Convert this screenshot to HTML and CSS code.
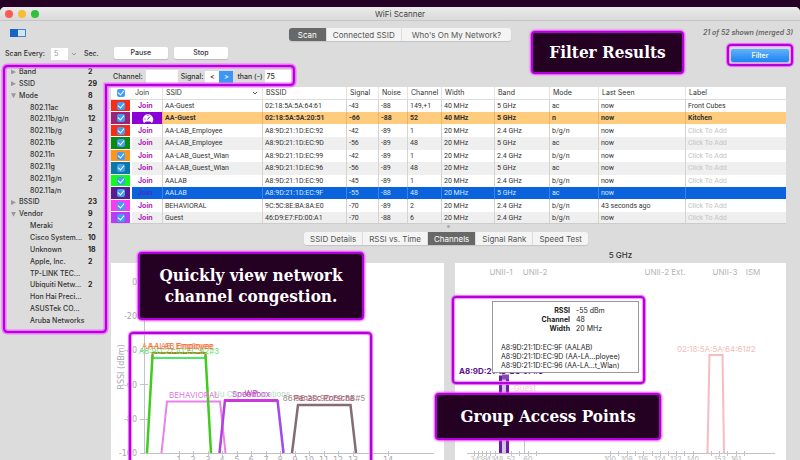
FILE: index.html
```html
<!DOCTYPE html>
<html lang="en">
<head>
<meta charset="utf-8">
<title>WiFi Scanner</title>
<link rel="stylesheet" href="styles.css">
</head>
<body>
<div class="window">
  <header class="titlebar">
    <span class="lights"><i class="light red"></i><i class="light yellow"></i><i class="light green"></i></span>
    <h1>WiFi Scanner</h1>
  </header>

  <div class="toolbar-top">
    <svg class="toggle" width="16" height="8" viewBox="0 0 16 8"><rect x=".5" y=".5" width="15" height="7" fill="#d3e3f3" stroke="#3f86cc"/><rect width="8" height="8" fill="#1565c8"/></svg>
    <nav class="tabs">
      <button class="tab active">Scan</button><button class="tab">Connected SSID</button><button class="tab wide">Who's On My Network?</button>
    </nav>
    <p class="count">21 of 52 shown (merged 3)</p>
  </div>

  <div class="toolbar-bottom">
    <label for="every">Scan Every:</label>
    <span class="combo"><select id="every" disabled><option>5</option></select><svg width="6" height="4" viewBox="0 0 6 4"><path d="M1 1l2 2 2-2" fill="none" stroke="#999"/></svg></span>
    <span class="sec">Sec.</span>
    <button class="push">Pause</button>
    <button class="push">Stop</button>
    <button class="push primary">Filter</button>
  </div>

  <div class="content">
    <ul class="sidebar">
      <li class="group"><span>Band</span><b>2</b></li>
      <li class="group"><span>SSID</span><b>29</b></li>
      <li class="group open"><span>Mode</span><b>8</b></li>
      <li><span>802.11ac</span><b>8</b></li>
      <li><span>802.11b/g/n</span><b>12</b></li>
      <li><span>802.11b/g</span><b>3</b></li>
      <li><span>802.11b</span><b>2</b></li>
      <li><span>802.11n</span><b>7</b></li>
      <li><span>802.11g</span></li>
      <li><span>802.11g/n</span><b>2</b></li>
      <li><span>802.11a/n</span></li>
      <li class="group"><span>BSSID</span><b>23</b></li>
      <li class="group open"><span>Vendor</span><b>9</b></li>
      <li><span>Meraki</span><b>2</b></li>
      <li><span>Cisco System...</span><b>10</b></li>
      <li><span>Unknown</span><b>18</b></li>
      <li><span>Apple, Inc.</span><b>2</b></li>
      <li><span>TP-LINK TEC...</span></li>
      <li><span>Ubiquiti Netw...</span><b>2</b></li>
      <li><span>Hon Hai Preci...</span></li>
      <li><span>ASUSTek CO...</span></li>
      <li><span>Aruba Networks</span></li>
    </ul>

    <main class="main">
      <form class="filters">
        <label for="channel">Channel:</label>
        <input id="channel" class="field channel" type="text">
        <label for="signal">Signal:</label>
        <span class="compare"><button type="button">&lt;</button><button type="button" class="on">&gt;</button></span>
        <label for="signal">than (-)</label>
        <input id="signal" class="field signal" type="text" value="75">
      </form>

      <div class="table-wrap">
      <table class="networks">
        <colgroup><col class="c-check"><col class="c-join"><col class="c-ssid"><col class="c-bssid"><col class="c-signal"><col class="c-noise"><col class="c-channel"><col class="c-width"><col class="c-band"><col class="c-mode"><col class="c-seen"><col></colgroup>
        <thead>
          <tr><th><input type="checkbox" checked aria-label="Show all"></th><th>Join</th><th class="sorted">SSID<svg width="6" height="4" viewBox="0 0 6 4"><path d="M1 1l2 2 2-2" fill="none" stroke="#555"/></svg></th><th>BSSID</th><th>Signal</th><th>Noise</th><th>Channel</th><th>Width</th><th>Band</th><th>Mode</th><th>Last Seen</th><th>Label</th></tr>
        </thead>
        <tbody>
          <tr><td class="sw s-red"><input type="checkbox" checked aria-label="Show"></td><td><a href="#">Join</a></td><td>AA-Guest</td><td>02:18:5A:5A:64:61</td><td>-43</td><td>-88</td><td>149,+1</td><td>40 MHz</td><td>5 GHz</td><td>ac</td><td>now</td><td>Front Cubes</td></tr>
          <tr class="current"><td class="sw s-plum"><input type="checkbox" checked aria-label="Show"></td><td class="gauge"><svg width="12" height="10" viewBox="0 0 12 10"><path d="M2 10A5.3 5.3 0 1 1 10 10L8 8.500H4z" fill="#fff"/><path d="M5.500 6.500L8 3.500M2.500 6h1M6 2v1" stroke="#7a1aa8" fill="none"/></svg></td><td>AA-Guest</td><td>02:18:5A:5A:20:51</td><td>-66</td><td>-88</td><td>52</td><td>40 MHz</td><td>5 GHz</td><td>n</td><td>now</td><td>Kitchen</td></tr>
          <tr><td class="sw s-red"><input type="checkbox" checked aria-label="Show"></td><td><a href="#">Join</a></td><td>AA-LAB_Employee</td><td>A8:9D:21:1D:EC:92</td><td>-42</td><td>-89</td><td>1</td><td>20 MHz</td><td>2.4 GHz</td><td>b/g/n</td><td>now</td><td class="hint">Click To Add</td></tr>
          <tr><td class="sw s-green"><input type="checkbox" checked aria-label="Show"></td><td><a href="#">Join</a></td><td>AA-LAB_Employee</td><td>A8:9D:21:1D:EC:9D</td><td>-56</td><td>-89</td><td>48</td><td>20 MHz</td><td>5 GHz</td><td>ac</td><td>now</td><td class="hint">Click To Add</td></tr>
          <tr><td class="sw s-orange"><input type="checkbox" checked aria-label="Show"></td><td><a href="#">Join</a></td><td>AA-LAB_Guest_Wlan</td><td>A8:9D:21:1D:EC:99</td><td>-42</td><td>-89</td><td>1</td><td>20 MHz</td><td>2.4 GHz</td><td>b/g/n</td><td>now</td><td class="hint">Click To Add</td></tr>
          <tr><td class="sw s-teal"><input type="checkbox" checked aria-label="Show"></td><td><a href="#">Join</a></td><td>AA-LAB_Guest_Wlan</td><td>A8:9D:21:1D:EC:96</td><td>-56</td><td>-89</td><td>48</td><td>20 MHz</td><td>5 GHz</td><td>ac</td><td>now</td><td class="hint">Click To Add</td></tr>
          <tr><td class="sw s-lime"><input type="checkbox" checked aria-label="Show"></td><td><a href="#">Join</a></td><td>AALAB</td><td>A8:9D:21:1D:EC:90</td><td>-45</td><td>-89</td><td>1</td><td>20 MHz</td><td>2.4 GHz</td><td>b/g/n</td><td>now</td><td class="hint">Click To Add</td></tr>
          <tr class="selected"><td class="sw s-purple"><input type="checkbox" checked aria-label="Show"></td><td><a href="#">Join</a></td><td>AALAB</td><td>A8:9D:21:1D:EC:9F</td><td>-55</td><td>-88</td><td>48</td><td>20 MHz</td><td>5 GHz</td><td>ac</td><td>now</td><td></td></tr>
          <tr><td class="sw s-pink"><input type="checkbox" checked aria-label="Show"></td><td><a href="#">Join</a></td><td>BEHAVIORAL</td><td>9C:5C:8E:BA:8A:E0</td><td>-70</td><td>-89</td><td>2</td><td>20 MHz</td><td>2.4 GHz</td><td>b/g/n</td><td>43 seconds ago</td><td class="hint">Click To Add</td></tr>
          <tr><td class="sw s-violet"><input type="checkbox" checked aria-label="Show"></td><td><a href="#">Join</a></td><td>Guest</td><td>46:D9:E7:FD:00:A1</td><td>-70</td><td>-88</td><td>6</td><td>20 MHz</td><td>2.4 GHz</td><td>b/g/n</td><td>now</td><td class="hint">Click To Add</td></tr>
        </tbody>
      </table>
      </div>

      <div class="splitter"><i></i></div>
      <nav class="tabs detail">
        <button class="tab">SSID Details</button><button class="tab">RSSI vs. Time</button><button class="tab active">Channels</button><button class="tab">Signal Rank</button><button class="tab">Speed Test</button>
      </nav>

      <div class="charts">
        <section class="chart left">
          <svg viewBox="111 263 333 202" preserveAspectRatio="xMinYMin slice">
            <g stroke="#c2c2c8" fill="none">
              <path d="M144.500 281V453.500M140 281.500h8M140 315.500h8M140 350.500h8M140 384.500h8M140 419.500h8M140 453.500H434"/>
              <path d="M179.500 451v5M193.500 451v5M208.500 451v5M222.500 451v5M237.500 451v5M251.500 451v5M266.500 451v5M280.500 451v5M295.500 451v5M309.500 451v5M324.500 451v5M338.500 451v5M353.500 451v5M388.500 451v5"/>
            </g>
            <g class="axis end"><text x="137" y="285">0</text><text x="137" y="319">-20</text><text x="137" y="353">-40</text><text x="137" y="388">-60</text><text x="137" y="422">-80</text><text x="137" y="456">-100</text></g>
            <g class="axis mid"><text x="179" y="463">1</text><text x="193" y="463">2</text><text x="208" y="463">3</text><text x="222" y="463">4</text><text x="237" y="463">5</text><text x="251" y="463">6</text><text x="266" y="463">7</text><text x="280" y="463">8</text><text x="295" y="463">9</text><text x="309" y="463">10</text><text x="324" y="463">11</text><text x="338" y="463">12</text><text x="353" y="463">13</text><text x="388" y="463">14</text>
              <text transform="translate(124 367) rotate(-90)">RSSI (dBm)</text></g>
            <g fill="none">
              <path d="M161.500 453L167 401.500H220L225.500 453" stroke="#ea80ea" stroke-width="2"/>
              <path d="M219.500 453L225 400" stroke="#b040e0" stroke-width="2.500"/>
              <path d="M224 400.500H278" stroke="#cc38d8" stroke-width="3"/>
              <path d="M277.500 400L283.500 453" stroke="#a048f4" stroke-width="2.500"/>
              <path d="M292 453L298 405H350.500L356 453" stroke="#846c74" stroke-width="2.500"/>
              <path d="M152.500 358V353H205.500V358" stroke="#b87820" stroke-width="2"/>
              <path d="M152.500 358H205.500" stroke="#4ce860" stroke-width="2"/>
              <path d="M147 453L152.500 355M205.500 355L211 453" stroke="#40cc1c" stroke-width="2.500"/>
            </g>
            <g class="name mid">
              <text x="179" y="354" fill="#5ce878">A8:9D:21:1D:EC:92#3</text>
              <text x="177" y="349" fill="#f08848">AA-LAB_Employee</text>
              <text x="181" y="349" fill="#ee7040">AALAB Employee</text>
              <text x="252" y="397" fill="#b4dcc0">Nu Communications</text>
              <text x="194" y="398" fill="#e078e0">BEHAVIORAL</text>
              <text x="251" y="397" fill="#cc50dc">Speedbox</text>
              <text x="251" y="396" fill="#c048b0">WP</text>
              <text x="324" y="401" fill="#a08890">86:9E:2D:9D:E9:8B#5</text>
              <text x="324" y="401" fill="#a85870">Panasc Porscha</text>
            </g>
          </svg>
        </section>
        <section class="chart right">
          <h2>5 GHz</h2>
          <svg viewBox="455 263 331 202" preserveAspectRatio="xMinYMin slice">
            <g class="bands mid"><text x="501" y="275">UNII-1</text><text x="535" y="275">UNII-2</text><text x="665" y="275">UNII-2 Ext.</text><text x="725" y="275">UNII-3</text><text x="753" y="275">ISM</text></g>
            <path d="M467 453.500H775M474.500 451v5M478.500 451v5M482.500 451v5M486.500 451v5M490.500 451v5M495.500 451v5M511.500 451v5M519.500 451v5M528.500 451v5M536.500 451v5M610.500 451v5M618.500 451v5M627.500 451v5M635.500 451v5M643.500 451v5M652.500 451v5M660.500 451v5M668.500 451v5M676.500 451v5M684.500 451v5M693.500 451v5M711.500 451v5M719.500 451v5M727.500 451v5M736.500 451v5M744.500 451v5M524.500 430V453" stroke="#c2c2c8" fill="none"/>
            <g class="ticks mid"><text x="475" y="462">34</text><text x="483" y="462">38</text><text x="491" y="462">43</text><text x="499" y="462">48</text><text x="511" y="462">52</text><text x="528" y="462">60</text><text x="610" y="462">100</text><text x="627" y="462">108</text><text x="643" y="462">116</text><text x="660" y="462">124</text><text x="676" y="462">132</text><text x="693" y="462">140</text><text x="720" y="462">153</text><text x="736" y="462">161</text></g>
            <path d="M500.500 453V377H507.500V453" fill="#d0c4e4" stroke="#6c1ca0" stroke-width="3"/>
            <path d="M502 377h7" stroke="#8848b0" stroke-width="5"/>
            <path d="M707.500 453L709.500 355H722.500L724 453" fill="none" stroke="#f6bcc2" stroke-width="2"/>
            <g class="name"><text class="strong" x="459" y="374" fill="#5c1490">A8:9D:21:1D:EC:9F#3</text><text x="510" y="391" fill="#f6ccd0">-Guest</text><text x="677" y="352" fill="#f6bcbc">02:18:5A:5A:64:61#2</text></g>
          </svg>
        </section>
      </div>
    </main>
  </div>
</div>

<svg class="outline scope" width="300" height="276" viewBox="0 0 300 276">
  <path class="halo" d="M8 4H290Q294 4 294 8V19Q294 23 290 23H106V266Q106 270 102 270H8Q4 270 4 266V8Q4 4 8 4z"/>
  <path class="core" d="M8 4H290Q294 4 294 8V19Q294 23 290 23H106V266Q106 270 102 270H8Q4 270 4 266V8Q4 4 8 4z"/>
</svg>
<div class="frame frame-filter"></div>
<div class="frame frame-congestion"></div>
<div class="frame frame-group">
  <div class="tip">
    <dl><dt>RSSI</dt><dd>-55 dBm</dd><dt>Channel</dt><dd>48</dd><dt>Width</dt><dd>20 MHz</dd></dl>
    <p>A8:9D:21:1D:EC:9F (AALAB)</p>
    <p>A8:9D:21:1D:EC:9D (AA-LA...ployee)</p>
    <p>A8:9D:21:1D:EC:96 (AA-LA...t_Wlan)</p>
  </div>
</div>
<div class="callout call-filter">Filter Results</div>
<div class="callout call-congestion">Quickly view network<br>channel congestion.</div>
<div class="callout call-group">Group Access Points</div>
</body>
</html>
```
FILE: styles.css
```css
* { box-sizing: border-box; }
body {
  margin: 0;
  min-height: 100vh;
  padding-top: 7px;
  position: relative;
  overflow: hidden;
  background: #250125;
  font-family: Inter, "Liberation Sans", sans-serif;
  font-size: 7px;
  line-height: 10px;
  color: #333;
  display: flex;
  flex-direction: column;
}
h1, h2, p, ul, dl, dd { margin: 0; padding: 0; }
button, input, select { font: inherit; color: inherit; border: 0; margin: 0; padding: 0; border-radius: 0; }
svg { display: block; }

.window { flex: 1; display: flex; flex-direction: column; background: #dcdcdc; border-radius: 5px 5px 0 0; }

.titlebar {
  position: relative;
  display: flex;
  align-items: center;
  justify-content: center;
  height: 14px;
  border-bottom: 1px solid #c6c6c6;
  border-radius: 5px 5px 0 0;
  background: linear-gradient(#ebebeb, #d9d9d9);
}
.titlebar h1 { font-size: 8px; font-weight: 400; color: #444; }
.lights { position: absolute; left: 5px; display: flex; gap: 5px; }
.light { width: 8px; height: 8px; border-radius: 50%; }
.red { background: #fb5b53; }
.yellow { background: #f8bd32; }
.green { background: #2cc23c; }

.toolbar-top { display: grid; grid-template-columns: 1fr auto 1fr; align-items: center; height: 25px; padding: 0 7px 0 10px; margin-top: 1px; }
.toolbar-top .toggle { margin-bottom: 3px; }
.count { justify-self: end; font-weight: 600; font-style: italic; color: #666; margin-bottom: 3px; }

.tabs { display: flex; height: 13px; border-radius: 3px; box-shadow: 0 1px 1px #c4c4c4; }
.tab { background: #f4f4f4; color: #555; font-size: 8px; padding: 0 6px; border-left: 1px solid #ddd; }
.tab:first-child { border-left: 0; border-radius: 3px 0 0 3px; }
.tab:last-child { border-radius: 0 3px 3px 0; }
.tab.active { background: #686868; color: #fff; }
.toolbar-top .tabs { margin-right: 3px; }
.toolbar-top .tab:first-child { padding: 0 9px; }
.tab.wide { padding: 0 10px; }

.toolbar-bottom { display: flex; align-items: flex-start; height: 19px; padding: 0 11px 0 5px; }
.toolbar-bottom label, .sec { font-weight: 500; line-height: 14px; }
.combo { display: flex; align-items: center; margin: 1px 7px 0 6px; gap: 3px; }
.combo select { width: 17px; height: 12px; padding-left: 3px; appearance: none; background: #fff; color: #999; opacity: 1; }
.sec { width: 30px; }
.push { width: 54px; height: 12px; margin-right: 6px; border-radius: 2px; background: #fff; font-size: 7px; font-weight: 500; box-shadow: 0 1px 1px #bbb; }
.push.primary { width: 58px; height: 13px; margin: 2px 0 0 auto; background: linear-gradient(#62b2fa, #1c82f4); color: #fff; }

.content { flex: 1; display: grid; grid-template-columns: 111px minmax(0, 1fr); padding-right: 14px; }
.sidebar { list-style: none; display: grid; grid-auto-rows: 1fr; align-self: start; height: 261px; font-weight: 500; }
.sidebar li { display: grid; grid-template-columns: 58px 1fr; align-items: center; padding-left: 30px; white-space: nowrap; }
.sidebar li.group { grid-template-columns: 8px 69px 1fr; padding-left: 11px; }
.sidebar li.group::before { content: ""; width: 5px; height: 5px; background: #999; clip-path: polygon(0 0, 100% 50%, 0 100%); }
.sidebar li.open::before { clip-path: polygon(0 0, 100% 0, 50% 100%); }
.sidebar b { font-weight: 700; color: #222; }

.main { display: flex; flex-direction: column; }
.filters { display: flex; align-items: center; height: 21px; padding-left: 2px; font-weight: 500; }
.field { height: 13px; background: #fff; padding: 0 2px; }
.channel { width: 32px; margin: 0 3px; }
.signal { width: 28px; margin-left: 2px; }
.compare { display: flex; margin: 0 4px 0 2px; }
.compare button { width: 14px; height: 12px; background: #fff; }
.compare .on { background: #3d96f5; color: #fff; }

.table-wrap { height: 136px; overflow: hidden; background: #fff; }
.networks { width: 100%; table-layout: fixed; border-collapse: separate; border-spacing: 0; line-height: 10px; }
.c-check { width: 21px; }
.c-join { width: 30px; }
.c-ssid { width: 100px; }
.c-bssid { width: 84px; }
.c-signal { width: 32px; }
.c-noise { width: 29px; }
.c-channel { width: 34px; }
.c-width { width: 53px; }
.c-band { width: 55px; }
.c-mode { width: 49px; }
.c-seen { width: 87px; }
.networks th { height: 13px; padding: 0 0 0 3px; text-align: left; font-weight: 400; border-left: 1px solid #e4e4e4; border-bottom: 1px solid #ddd; }
.networks th:nth-child(-n+2), .networks td:nth-child(-n+2) { border-left: 0; }
.networks th:first-child, .networks td:first-child { padding-left: 6px; }
.networks td { height: 12px; padding: 0 0 1px 2px; border-left: 1px solid #d4d4d4; white-space: nowrap; background-clip: padding-box; font-family: Roboto, "Liberation Sans", sans-serif; }
.networks tr:nth-child(even) td { height: 13px; background-color: #efefef; }
.networks a { display: block; padding-left: 4px; color: #aa22b4; font-family: Inter, "Liberation Sans", sans-serif; font-weight: 700; text-decoration: none; }
.sorted svg { float: right; margin: 3px 4px 0 0; }
.networks input { appearance: none; display: block; width: 8px; height: 8px; border-radius: 2px; background: #3f9df5; }
.networks input::after { content: ""; display: block; width: 3px; height: 5px; margin: 0 auto; border: solid #fff; border-width: 0 1px 1px 0; transform: rotate(40deg); }
.networks tr td.sw { border-right: 2px solid #fff; border-bottom: 1px solid #fff; padding-bottom: 0; }
.networks tbody td.s-red { background-color: #fb2c16; }
.networks tbody tr td.s-plum { background-color: #9c2478; }
.networks tbody tr td.s-green { background-color: #0a8a12; }
.networks tbody td.s-orange { background-color: #ff9418; }
.networks tbody tr td.s-teal { background-color: #0c78a8; }
.networks tbody td.s-lime { background-color: #12fa1c; }
.networks tbody tr td.s-purple { background-color: #5a1a90; }
.networks tbody td.s-pink { background-color: #fa3cf0; }
.networks tbody tr td.s-violet { background-color: #b83cf4; }
.networks tr.current td:not(.sw) { background: #ffcb7c; font-weight: 700; border-left-color: #e6b46a; border-bottom: 1px solid #fff; padding-bottom: 0; }
.networks tr.current td.gauge { background: #8c00d8; }
.gauge svg { margin-left: 8px; }
.networks tr.selected td:not(.sw) { background: #0a62dc; color: #d8e8ff; border-left-color: #3a84e8; border-bottom: 1px solid #fff; }
.networks tr.selected a { color: #4430b8; }
.networks .hint { color: #c4c4c4; }

.splitter { height: 9px; display: flex; justify-content: center; align-items: flex-start; border-top: 1px solid #ccc; }
.splitter i { width: 3px; height: 3px; margin-top: 1px; border-radius: 50%; background: #aaa; }
.detail { align-self: center; margin-right: 5px; }

.charts { flex: 1; display: grid; grid-template-columns: 333fr 331fr; gap: 11px; }
.chart { display: flex; flex-direction: column; padding-top: 18px; }
.chart svg { width: 100%; background: #fff; flex: 1; height: 197px; }
.chart h2 { height: 10px; margin-top: -13px; margin-bottom: 3px; text-align: center; font-size: 8px; font-weight: 500; }
.axis text { font-family: "DejaVu Sans", sans-serif; font-size: 8px; fill: #a8a8b0; }
.ticks text { font-size: 7px; fill: #b4b4b4; }
.bands text { font-size: 8px; fill: #b4b4b4; }
.name text { font-size: 8px; }
.name .strong { font-weight: 700; }
.end { text-anchor: end; }
.mid { text-anchor: middle; }

/* Annotations drawn over the window */
.outline, .frame, .callout { position: absolute; }
.outline { left: 0; top: 62px; fill: none; pointer-events: none; }
.halo { stroke: #ee74fa; stroke-width: 5; }
.core { stroke: #b400dc; stroke-width: 2; }
.frame { border: 2px solid #b400dc; border-radius: 4px; box-shadow: 0 0 1px 1px #f060fc, inset 0 0 1px 1px #f48cfc; }
.frame-filter { left: 727px; top: 44px; width: 66px; height: 22px; pointer-events: none; }
.frame-congestion { left: 129px; top: 332px; width: 243px; height: 140px; pointer-events: none; }
.frame-group { left: 452px; top: 296px; width: 193px; height: 88px; padding: 3px 4px 9px 38px; }
.tip { height: 72px; border: 1px solid #999; background: #fff; padding: 4px 0 0 8px; line-height: 9px; white-space: nowrap; color: #222; }
.tip dl { display: grid; grid-template-columns: 69px 1fr; column-gap: 6px; margin-bottom: 10px; }
.tip dt { text-align: right; font-weight: 700; }
.callout {
  display: flex;
  align-items: center;
  justify-content: center;
  text-align: center;
  background: #240022;
  color: #fff;
  border: 2px solid #b400dc;
  border-radius: 4px;
  box-shadow: 0 0 2px 1px #f040fc;
  font: 700 17px/21px "DejaVu Serif Condensed", "DejaVu Serif", serif;
}
.call-filter { left: 531px; top: 31px; width: 153px; height: 43px; }
.call-congestion { left: 138px; top: 252px; width: 226px; height: 68px; }
.call-group { left: 435px; top: 393px; width: 226px; height: 47px; }
```
